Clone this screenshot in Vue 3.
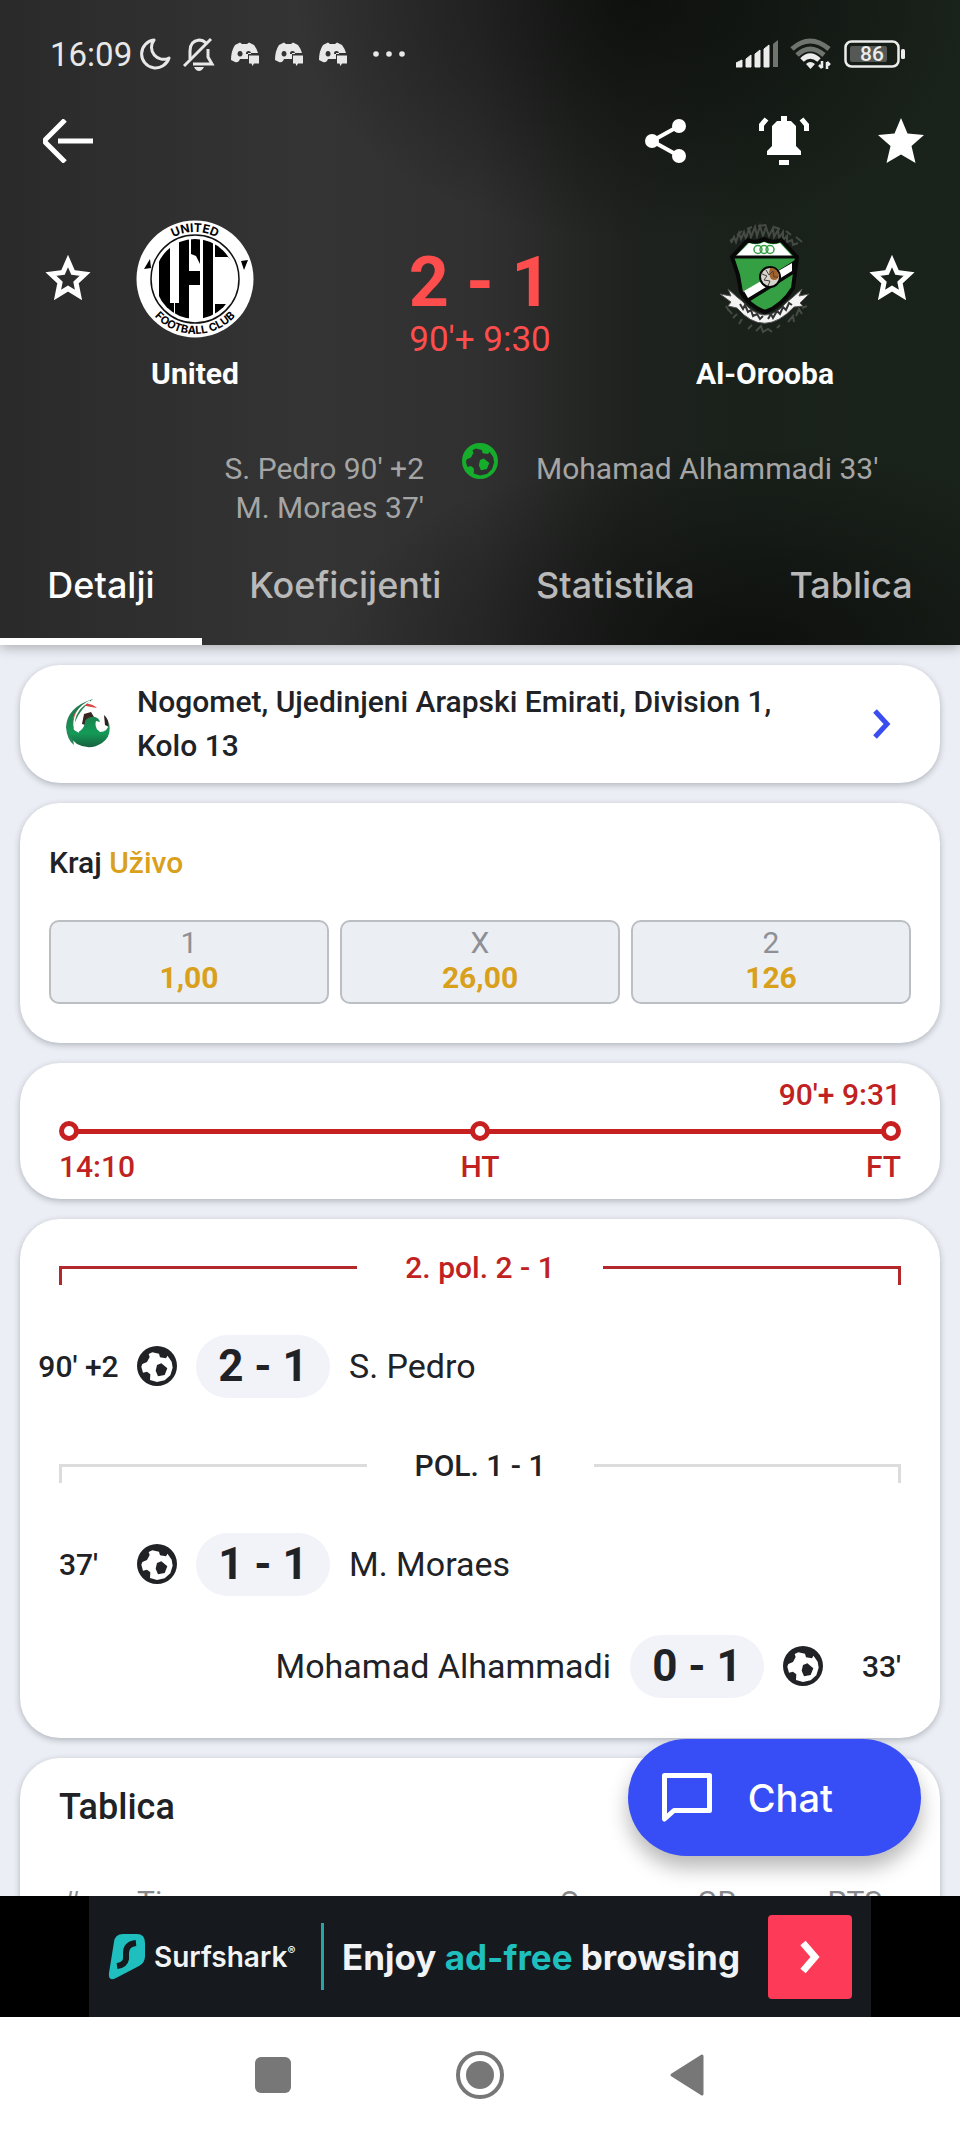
<script setup>
import { ref } from 'vue'

const tabs = ['Detalji', 'Koeficijenti', 'Statistika', 'Tablica']
const active = ref('Detalji')

const odds = [
  { label: '1', value: '1,00' },
  { label: 'X', value: '26,00' },
  { label: '2', value: '126' },
]

const periods = [
  {
    title: '2. pol. 2 - 1',
    live: true,
    goals: [{ time: "90' +2", score: '2 - 1', player: 'S. Pedro', away: false }],
  },
  {
    title: 'POL. 1 - 1',
    live: false,
    goals: [
      { time: "37'", score: '1 - 1', player: 'M. Moraes', away: false },
      { time: "33'", score: '0 - 1', player: 'Mohamad Alhammadi', away: true },
    ],
  },
]

const ball =
  'M12 0a12 12 0 1 0 0 24a12 12 0 1 0 0-24zM9.2 3.7L13.2 4.7L13.8 6.8L17.4 7.4L18.3 5.8L20.8 9.4L21.4 13L20 17.5L16.6 20.6L12 21.6L7.8 20.4L8 17L6 15.4L3.6 16L2.6 12.5L3.2 10.8L6 9.6L7.6 6.6L7 4.8zM14.6 10.4L18.2 13.4L16.6 17.4L12.6 18.2L11.2 14.8L12 11.4z'
const star = 'M24 1L30.5 16.5L47 18L34.500 29L38.500 46L24 37.500L9.500 46L13.500 29L1 18L17.500 16.500z'
</script>

<template>
  <div class="screen">
    <header class="hero">
      <div class="status">
        <span class="clock">16:09</span>
        <svg class="moon" viewBox="0 0 32 32" width="32" height="32">
          <path d="M15 2A14 14 0 1 0 30 20A12 12 0 0 1 15 2z" fill="none" stroke="#e8e8e8" stroke-width="3" stroke-linejoin="round" />
        </svg>
        <svg class="mute" viewBox="0 0 32 34" width="32" height="34">
          <g fill="none" stroke="#e8e8e8" stroke-width="3">
            <path d="M7 22V14Q7 4 16 3Q20 3 23 6M25 12V20L29 27H10" />
            <path d="M1 29L28 2" />
          </g>
          <path d="M11 30h10q-2 4-5 4t-5-4z" fill="#e8e8e8" />
        </svg>
        <svg v-for="n in 3" :key="n" class="discord" viewBox="0 0 28 24" width="28" height="24">
          <path
            d="M4 3L9 0.500L11 2H16L18 0.500L23 3Q26 7 27 11H17V17H9L8 19Q6 21 4 20L0 18Q0 9 4 3zM9 9a2.500 2.800 0 1 0 .1 0zM17.500 9a2.500 2.800 0 0 0-2.500 3l5 0a2.500 2.800 0 0 0-2.500-3z"
            fill="#e8e8e8"
            fill-rule="evenodd"
          />
          <path d="M18 13.500H28V21.500H23L21.500 24L20.500 21.500H18z" fill="#e8e8e8" />
        </svg>
        <svg class="dots" viewBox="0 0 32 6" width="32" height="6" fill="#e8e8e8">
          <circle cx="3" cy="3" r="2.800" /><circle cx="16" cy="3" r="2.800" /><circle cx="29" cy="3" r="2.800" />
        </svg>
        <span class="spacer"></span>
        <svg class="signal" viewBox="0 0 42 28" width="42" height="28" fill="#ececec">
          <path d="M0 23L6 20V27H0zM10 19L15 15V27H10zM19 14L24 10V27H19zM28 9L33 5V27H28z" stroke="#ececec" stroke-linejoin="round" />
          <path d="M37 4L42 0V27H37z" fill="#70746f" />
        </svg>
        <svg class="wifi" viewBox="0 0 42 32" width="42" height="32" fill="none">
          <path d="M2 11Q20-5 39 11" stroke="#70746f" stroke-width="5" />
          <path d="M7 17Q20 5 34 17" stroke="#70746f" stroke-width="5" />
          <path d="M12 22Q20 14 29 22" stroke="#ececec" stroke-width="5" />
          <path d="M16 26Q20 22 25 26L20.500 31z" fill="#ececec" />
          <path d="M32 23V30M29 27L32 30M37 31V24M40 27L37 24" stroke="#ececec" stroke-width="2.500" />
        </svg>
        <svg class="battery" viewBox="0 0 62 28" width="62" height="28">
          <rect x="1.500" y="1.500" width="53" height="25" rx="6" fill="none" stroke="#ececec" stroke-width="2.500" />
          <rect x="6" y="6" width="37" height="16" rx="2" fill="#555854" />
          <rect x="57" y="9" width="4" height="10" rx="1.500" fill="#ececec" />
          <text x="28" y="21" text-anchor="middle" class="level">86</text>
        </svg>
      </div>

      <div class="toolbar">
        <button class="tool" aria-label="Natrag">
          <svg viewBox="0 0 50 44" width="50" height="44" fill="none" stroke="#fff" stroke-width="5">
            <path d="M22 1L3 20Q1 22 3 24L22 43M15 22H50" />
          </svg>
        </button>
        <span class="spacer"></span>
        <button class="tool" aria-label="Podijeli">
          <svg viewBox="0 0 42 46" width="42" height="46" fill="#fff">
            <path d="M34 8L7 23L34 38" fill="none" stroke="#fff" stroke-width="4" />
            <circle cx="34" cy="8" r="7" /><circle cx="7" cy="23" r="7" /><circle cx="34" cy="38" r="7" />
          </svg>
        </button>
        <button class="tool" aria-label="Obavijesti">
          <svg viewBox="0 0 50 50" width="50" height="50" fill="#fff">
            <path d="M22 0H28V5H32L37 10V30L42 35V39H8V35L13 30V10L18 5H22zM20 44H30V49H20z" />
            <path d="M2.500 15V9L7.500 3M47.500 15V9L42.500 3" fill="none" stroke="#fff" stroke-width="5" />
          </svg>
        </button>
        <button class="tool" aria-label="Favorit">
          <svg viewBox="0 0 48 48" width="48" height="48" fill="#fff"><path :d="star" /></svg>
        </button>
      </div>

      <div class="match">
        <button class="follow" aria-label="Prati United">
          <svg viewBox="0 0 48 48" width="48" height="48" fill="none" stroke="#fff" stroke-width="5">
            <path d="M24 7L29 18.500L41 20L32 28.500L34.500 41L24 34.500L13.500 41L16 28.500L7 20L19 18.500z" />
          </svg>
        </button>
        <div class="team">
          <svg viewBox="0 0 118 118" width="118" height="118" aria-hidden="true">
            <defs>
              <clipPath id="disc"><circle cx="59" cy="59" r="40" /></clipPath>
              <path id="arcTop" d="M12 59A47 47 0 0 1 106 59" />
              <path id="arcBottom" d="M4 59A55 55 0 0 0 114 59" />
            </defs>
            <circle cx="59" cy="59" r="58.500" fill="#fff" />
            <circle cx="59" cy="59" r="44" fill="none" stroke="#111" stroke-width="1.500" />
            <g clip-path="url(#disc)">
              <path
                d="M23 10H34V83H38V110H23zM43 10H53V110H39V83H43zM53 51H64V65H53zM55 10H64V44L60 36L55 34zM67 10H77V110H67zM79 10L98 30V43L92 37H79zM79 84H91L96 77V95L79 100z"
              />
            </g>
            <path d="M8 49L14 39L15 48zM105 41L112 40L108 50z" />
            <text class="badge wide"><textPath href="#arcTop" startOffset="50%" text-anchor="middle">UNITED</textPath></text>
            <text class="badge"><textPath href="#arcBottom" startOffset="50%" text-anchor="middle">FOOTBALL CLUB</textPath></text>
          </svg>
          <span class="name">United</span>
        </div>
        <div class="result">
          <strong class="score">2 - 1</strong>
          <span class="minute">90'+ 9:30</span>
        </div>
        <div class="team">
          <svg viewBox="0 0 90 118" width="90" height="118" aria-hidden="true">
            <g fill="none" stroke="#454a45">
              <path d="M11 23l3-6 2 5 3-9 2 6 3-7 2 7 3-11 2 9 4-10 2 9 3-10 3 10 3-9 3 9 4-8 1 9 4-7 1 8 4-6 0 8 4-4 0 6 5-2 1 5 5-2" stroke-width="2" />
              <path d="M10 21l4-3M17 15l5-4M27 9l5-2M38 6l8-1M54 7l6 2M66 11l5 4M76 17l6 5" stroke-width="2" />
              <path d="M6 86l3 5M9 90l3 4M13 98l4-4M19 104l3-5M28 109l4-4M36 111l5-5 2 6 5-3 4 3M57 108l3-3M68 102l5-6 1 6M76 96l3-7 3 5M82 88l5-2" stroke-width="2" />
            </g>
            <path d="M0 74L11 76L8 69L17 77L22 81Q45 108 66 83L73 77L82 69L79 76L89 74L80 83L83 86L74 87Q44 119 17 88L8 86L11 82z" fill="#f4f4f4" stroke="#555" />
            <path d="M20 84l3 5 2-4 3 7 3-2 2 6 4-2 3 5 3-3M48 99l3-5 2 4 4-7 3 3 3-7 3 3 3-7 3 2" fill="none" stroke="#333" stroke-width="2" />
            <path d="M28 20Q37 24 44 19Q52 24 61 20L77 37L73 68Q62 86 45 92Q29 86 21 72L18 55L12 37z" fill="#35a043" stroke="#080808" stroke-width="4" />
            <path d="M29 23Q37 26 44 22Q52 26 60 23L72 36H16z" fill="#fff" />
            <path d="M14 37H76" stroke="#080808" stroke-width="3" />
            <path d="M21 74L75 40V53L27 83z" fill="#080808" />
            <path d="M24 71L72 43V51L28 78z" fill="#fff" />
            <g fill="none" stroke="#35a043" stroke-width="1.500">
              <circle cx="38" cy="29.500" r="4" /><circle cx="44" cy="29.500" r="4" /><circle cx="50" cy="29.500" r="4" />
            </g>
            <circle cx="50" cy="57" r="10" fill="#d8d4cc" stroke="#080808" stroke-width="2" />
            <path d="M50 48Q57 47 59 56Q57 62 51 59Q48 54 50 48z" fill="#a4622a" />
            <path d="M42 54l5 2-3 4 6 1-2 5M46 50l3 5 4-4 1 6 4 0" fill="none" stroke="#444" />
          </svg>
          <span class="name">Al-Orooba</span>
        </div>
        <button class="follow" aria-label="Prati Al-Orooba">
          <svg viewBox="0 0 48 48" width="48" height="48" fill="none" stroke="#fff" stroke-width="5">
            <path d="M24 7L29 18.500L41 20L32 28.500L34.500 41L24 34.500L13.500 41L16 28.500L7 20L19 18.500z" />
          </svg>
        </button>
      </div>

      <div class="scorers">
        <div class="home">
          <div>S. Pedro 90' +2</div>
          <div>M. Moraes 37'</div>
        </div>
        <svg viewBox="0 0 24 24" width="36" height="36"><path :d="ball" fill="#17ad2c" fill-rule="evenodd" /></svg>
        <div class="guest">Mohamad Alhammadi 33'</div>
      </div>

      <nav class="tabs">
        <button v-for="t in tabs" :key="t" class="tab" :class="{ on: t === active }" @click="active = t">{{ t }}</button>
      </nav>
    </header>

    <div class="body">
      <main class="feed">
        <a class="card league" href="#">
          <svg viewBox="0 0 46 50" width="46" height="50" aria-hidden="true">
            <defs>
              <linearGradient id="leaf" x1="0" y1="0" x2="0" y2="1">
                <stop offset="0" stop-color="#1d6b45" /><stop offset="0.700" stop-color="#149a58" /><stop offset="1" stop-color="#17603c" />
              </linearGradient>
            </defs>
            <path d="M28 0Q2 8 1 28Q2 41 9 46Q3 20 28 0z" fill="#2b8558" />
            <path d="M12 10Q6 14 5 22L8 19L9 21z" fill="#d8504a" />
            <path d="M19 5Q26 4 32 9L21 7z" fill="#d8433d" />
            <path d="M19 15L26 13L29 18L24 27L17 25z" fill="#3a2320" />
            <path d="M39 16Q44 20 44 28L40 26z" fill="#2b2320" />
            <path d="M27 1Q6 9 7 27Q9 34 15 32Q20 28 20 22Q24 17 30 18Q34 19 35 23L31 22Q29 29 35 33Q43 33 44 24Q47 37 37 44Q25 52 12 45Q0 36 3 22Q8 7 27 1z" fill="url(#leaf)" />
            <path d="M25 2Q9 10 9 26Q10 31 14 33" fill="none" stroke="#fff" stroke-width="1.500" />
          </svg>
          <span class="path">Nogomet, Ujedinjeni Arapski Emirati, Division 1, Kolo 13</span>
          <svg viewBox="0 0 20 30" width="20" height="30" fill="none" stroke="#3a4ef0" stroke-width="5"><path d="M3 2L15 15L3 28" /></svg>
        </a>

        <section class="card betting">
          <h2 class="caption">Kraj <span class="gold">Uživo</span></h2>
          <div class="odds">
            <button v-for="o in odds" :key="o.label" class="odd">
              <span class="kind">{{ o.label }}</span>
              <strong class="gold">{{ o.value }}</strong>
            </button>
          </div>
        </section>

        <section class="card progress">
          <div class="now">90'+ 9:31</div>
          <div class="track"><i></i><i></i><i></i></div>
          <div class="marks"><span>14:10</span><span>HT</span><span>FT</span></div>
        </section>

        <section class="card events">
          <template v-for="p in periods" :key="p.title">
            <div class="period" :class="{ live: p.live }">
              <span class="arm left"></span>
              <h3>{{ p.title }}</h3>
              <span class="arm right"></span>
            </div>
            <div v-for="g in p.goals" :key="g.score" class="goal" :class="{ away: g.away }">
              <span class="time">{{ g.time }}</span>
              <svg viewBox="0 0 24 24" width="40" height="40"><path :d="ball" fill="#202226" fill-rule="evenodd" /></svg>
              <strong class="pill">{{ g.score }}</strong>
              <span class="player">{{ g.player }}</span>
            </div>
          </template>
        </section>

        <section class="card standings">
          <h2 class="heading">Tablica</h2>
          <table>
            <thead>
              <tr><th class="rank">#</th><th class="side">Tim</th><th class="stat">O</th><th class="stat">GR</th><th class="points">PTS</th></tr>
            </thead>
          </table>
        </section>
      </main>

      <button class="chat">
        <svg viewBox="0 0 50 50" width="50" height="50" fill="none" stroke="#fff" stroke-width="5" stroke-linejoin="round">
          <path d="M2.500 2.500H47.500V37.500H12L2.500 46z" />
        </svg>
        <span>Chat</span>
      </button>
    </div>

    <aside class="ad">
      <a class="banner" href="#">
        <svg viewBox="0 0 37 46" width="37" height="46" aria-hidden="true">
          <path d="M15 0H29Q37 0 37 9V22Q37 29 31 32L8 44Q0 48 1 39L6 8Q7 0 15 0z" fill="#1fbfbf" />
          <path d="M28 9Q18 10 18 19V25Q17 31 9 32" fill="none" stroke="#161a1e" stroke-width="6" />
        </svg>
        <span class="brand">Surfshark<sup>®</sup></span>
        <span class="rule"></span>
        <span class="slogan">Enjoy <em>ad-free</em> browsing</span>
        <span class="go">
          <svg viewBox="0 0 22 34" width="22" height="34" fill="none" stroke="#fff" stroke-width="7"><path d="M4 3L16 17L4 31" /></svg>
        </span>
      </a>
    </aside>

    <nav class="system">
      <button aria-label="Nedavno"><svg viewBox="0 0 36 36" width="36" height="36"><rect width="36" height="36" rx="6" fill="#777" /></svg></button>
      <button aria-label="Početna">
        <svg viewBox="0 0 50 50" width="50" height="50"><circle cx="25" cy="25" r="22" fill="none" stroke="#777" stroke-width="4" /><circle cx="25" cy="25" r="14" fill="#777" /></svg>
      </button>
      <button aria-label="Natrag">
        <svg viewBox="0 0 34 42" width="34" height="42"><path d="M32 2V40L2 21z" fill="#777" stroke="#777" stroke-width="3" stroke-linejoin="round" /></svg>
      </button>
    </nav>
  </div>
</template>

<style>
body {
  margin: 0;
}
</style>

<style scoped>
* {
  box-sizing: border-box;
}
.screen {
  display: flex;
  flex-direction: column;
  height: 100vh;
  font-family: Roboto, 'Liberation Sans', sans-serif;
  font-size: 30px;
  color: #202226;
  background: #fff;
}
button {
  margin: 0;
  padding: 0;
  border: 0;
  background: none;
  font: inherit;
  color: inherit;
}
a {
  color: inherit;
  text-decoration: none;
}
svg {
  display: block;
  flex: none;
}
h2,
h3 {
  margin: 0;
  font-size: inherit;
  font-weight: 500;
}
.spacer {
  flex: 1;
}

.hero {
  position: relative;
  z-index: 1;
  color: #fff;
  background:
    radial-gradient(ellipse 340px 240px at 66% 0, rgba(8, 9, 8, 0.7), rgba(8, 9, 8, 0)),
    radial-gradient(ellipse 420px 200px at 78% 100%, rgba(12, 12, 12, 0.8), rgba(12, 12, 12, 0)),
    linear-gradient(90deg, #2a2a2a 0, #343434 32%, #303030 50%, #1f221f 65%, #19211a 78%, #1a231b 100%);
  box-shadow: 0 2px 12px rgba(0, 0, 0, 0.3);
}
.status {
  display: flex;
  align-items: center;
  height: 108px;
  padding: 0 54px 0 50px;
}
.clock {
  font-size: 33px;
  color: #e8e8e8;
}
.moon {
  margin-left: 7px;
}
.mute {
  margin-left: 12px;
}
.discord {
  margin-left: 16px;
}
.dots {
  margin-left: 26px;
}
.wifi {
  margin: 0 12px;
}
.level {
  font-size: 21px;
  font-weight: 500;
  fill: #ececec;
}
.toolbar {
  display: flex;
  align-items: center;
  height: 66px;
  padding: 0 35px 0 43px;
}
.tool + .tool {
  margin-left: 72px;
}
.tool:last-child {
  margin-left: 68px;
}
.match {
  display: grid;
  grid-template-columns: 48px 206px 1fr 206px 48px;
  align-items: start;
  padding: 46px 44px 0;
}
.follow {
  padding-top: 34px;
}
.team {
  display: flex;
  flex-direction: column;
  align-items: center;
}
.name {
  margin-top: 16px;
  font-size: 30px;
  font-weight: 700;
  line-height: 40px;
}
.result {
  display: flex;
  flex-direction: column;
  align-items: center;
  color: #fd4d4d;
}
.score {
  margin-top: 26px;
  font-size: 70px;
  line-height: 72px;
}
.minute {
  margin-top: 4px;
  font-size: 35px;
  line-height: 36px;
}
.scorers {
  display: grid;
  grid-template-columns: 1fr 36px 1fr;
  column-gap: 38px;
  padding: 49px 0 9px;
  line-height: 39px;
  color: #a5a5a5;
}
.home {
  padding-top: 6px;
  text-align: right;
}
.guest {
  padding-top: 6px;
}
.tabs {
  display: flex;
}
.tab {
  flex: 1 1 auto;
  height: 109px;
  padding-bottom: 4px;
  font-family: Inter, sans-serif;
  font-size: 36px;
  font-weight: 500;
  color: #b9b9b9;
  border-bottom: 7px solid transparent;
}
.tab.on {
  color: #fff;
  border-color: #fff;
}

.body {
  position: relative;
  flex: 1;
  min-height: 0;
  overflow: hidden;
  background: #ebeef4;
}
.feed {
  display: flex;
  flex-direction: column;
  gap: 20px;
  padding: 20px;
}
.card {
  background: #fff;
  border-radius: 40px;
  box-shadow: 0 2px 6px rgba(40, 45, 60, 0.3);
}
.league {
  display: flex;
  align-items: center;
  padding: 15px 48px 15px 45px;
  line-height: 44px;
}
.path {
  flex: 1;
  margin: 0 80px 0 26px;
  font-weight: 500;
}
.betting {
  padding: 40px 29px 39px;
}
.caption {
  line-height: 40px;
}
.gold {
  color: #d9a01c;
}
.odds {
  display: grid;
  grid-template-columns: repeat(3, 1fr);
  gap: 11px;
  margin-top: 37px;
}
.odd {
  display: flex;
  flex-direction: column;
  align-items: center;
  padding: 3px 0 7px;
  line-height: 35px;
  background: #ebeef3;
  border: 2px solid #bbbec2;
  border-radius: 10px;
}
.kind {
  color: #8e9095;
}
.progress {
  padding: 14px 39px;
  font-weight: 500;
  color: #c02222;
  line-height: 36px;
}
.now {
  text-align: right;
}
.track {
  display: flex;
  justify-content: space-between;
  align-items: center;
  height: 36px;
  background: linear-gradient(#c62020, #c62020) center / calc(100% - 20px) 5px no-repeat;
}
.track i {
  width: 20px;
  height: 20px;
  border: 5px solid #c62020;
  border-radius: 50%;
  background: #fff;
}
.marks {
  display: grid;
  grid-template-columns: 1fr auto 1fr;
}
.marks :last-child {
  text-align: right;
}
.events {
  padding-bottom: 21px;
}
.period {
  display: flex;
  align-items: center;
  gap: 48px;
  height: 96px;
  padding: 0 39px;
}
.arm {
  flex: 1;
  height: 19px;
  margin-top: 17px;
  border-top: 3px solid #dcdcdc;
}
.arm.left {
  border-left: 3px solid #dcdcdc;
}
.arm.right {
  border-right: 3px solid #dcdcdc;
}
.live {
  color: #c02222;
}
.live .arm {
  border-color: #b3292b;
}
.goal {
  display: flex;
  align-items: center;
  height: 102px;
}
.goal.away {
  flex-direction: row-reverse;
}
.time {
  width: 117px;
  text-align: center;
  font-weight: 500;
}
.pill {
  min-width: 134px;
  margin: 0 19px;
  font-size: 44px;
  line-height: 63px;
  text-align: center;
  background: #f2f3f8;
  border-radius: 32px;
}
.player {
  font-size: 34px;
}
.standings {
  padding: 28px 39px;
}
.heading {
  font-size: 36px;
  line-height: 42px;
}
table {
  width: 100%;
  margin-top: 54px;
  border-collapse: collapse;
  table-layout: fixed;
  color: #85878b;
}
th {
  padding: 0;
  font-weight: 400;
  line-height: 40px;
  text-align: center;
}
.rank {
  width: 24px;
}
.side {
  padding-left: 54px;
  text-align: left;
}
.stat {
  width: 147px;
}
.points {
  width: 111px;
  padding-right: 19px;
  text-align: right;
}
.chat {
  position: absolute;
  right: 39px;
  bottom: 40px;
  display: flex;
  align-items: center;
  gap: 36px;
  height: 117px;
  padding: 0 88px 0 34px;
  font-family: Inter, sans-serif;
  font-size: 38px;
  font-weight: 500;
  color: #fff;
  background: #374df5;
  border-radius: 59px;
  box-shadow: 0 12px 20px rgba(0, 0, 0, 0.28);
}

.ad {
  display: flex;
  justify-content: center;
  background: #000;
}
.banner {
  display: flex;
  align-items: center;
  width: 782px;
  height: 121px;
  padding: 0 19px;
  font-family: Inter, sans-serif;
  color: #f2f3f4;
  background: #161a1e;
}
.brand {
  margin-left: 9px;
  font-size: 28px;
  font-weight: 600;
}
.brand sup {
  font-size: 12px;
  vertical-align: 12px;
}
.rule {
  width: 3px;
  height: 67px;
  margin: 0 18px 0 auto;
  background: #2ba3a5;
}
.slogan {
  font-size: 35px;
  font-weight: 700;
}
.slogan em {
  font-style: normal;
  color: #1fbfbf;
}
.go {
  display: grid;
  place-items: center;
  width: 84px;
  height: 84px;
  margin-left: 28px;
  background: #fd3a57;
  border-radius: 4px;
}
.system {
  display: flex;
  justify-content: center;
  align-items: center;
  height: 116px;
}
.system button {
  display: grid;
  place-items: center;
  width: 207px;
}
.badge {
  font-family: Inter, sans-serif;
  font-size: 11px;
  font-weight: 700;
}
.badge.wide {
  font-size: 12px;
}
</style>
